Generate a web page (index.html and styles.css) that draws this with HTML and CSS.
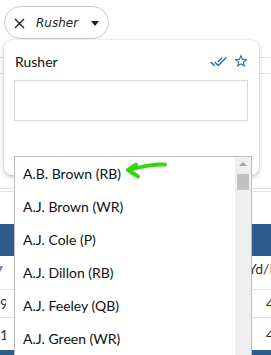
FILE: index.html
```html
<!DOCTYPE html>
<html>
<head>
<meta charset="utf-8">
<link rel="stylesheet" href="styles.css">
</head>
<body>
<div class="page">
  <div class="pill">
    <svg class="pill-x" width="11" height="11" viewBox="0 0 11 11"><path d="M1 1L10 10M10 1L1 10" stroke="#222" stroke-width="1.4" fill="none"/></svg>
    <span class="pill-text">Rusher</span>
    <span class="pill-caret"></span>
  </div>
  <div class="bg">
    <div class="bg-line l1"></div>
    <div class="bg-line l2"></div>
    <div class="bg-line l3"></div>
    <div class="bg-line l4"></div>
    <div class="bg-head"></div>
    <div class="bg-row r1"><span class="c-left caret">▾</span><span class="c-right">Yd/R</span></div>
    <div class="bg-row r2"><span class="c-left">9</span><span class="c-right">4</span></div>
    <div class="bg-row r3"><span class="c-left">1</span><span class="c-right">4</span></div>
    <div class="bg-head last"></div>
  </div>
</div>

<div class="panel">
  <div class="panel-head">
    <span class="panel-title">Rusher</span>
    <span class="panel-icons">
      <svg width="17" height="17" viewBox="0 0 24 24"><path fill="#2667b0" d="M18 7l-1.41-1.41-6.34 6.34 1.41 1.41L18 7zm4.24-1.41L11.66 16.17 7.48 12l-1.41 1.41L11.66 19l12-12-1.42-1.41zM.41 13.41L6 19l1.41-1.41L1.83 12 .41 13.41z"/></svg>
      <svg width="16" height="16" viewBox="0 0 24 24"><path fill="#2667b0" d="M22 9.24l-7.19-.62L12 2 9.19 8.63 2 9.24l5.46 4.73L5.82 21 12 17.27 18.18 21l-1.63-7.03L22 9.24zM12 15.4l-3.76 2.27 1-4.28-3.320-2.88 4.38-.38L12 6.1l1.71 4.04 4.38.38-3.32 2.88 1 4.28L12 15.4z"/></svg>
    </span>
  </div>
  <div class="panel-input"></div>
</div>

<div class="list">
  <div class="list-items">
    <div class="item">A.B. Brown (RB)</div>
    <div class="item">A.J. Brown (WR)</div>
    <div class="item">A.J. Cole (P)</div>
    <div class="item">A.J. Dillon (RB)</div>
    <div class="item">A.J. Feeley (QB)</div>
    <div class="item">A.J. Green (WR)</div>
  </div>
  <div class="scrollbar">
    <span class="sb-up"></span>
    <span class="sb-thumb"></span>
  </div>
</div>

<svg class="arrow" width="271" height="355" viewBox="0 0 271 355">
  <path d="M165 164.5 Q150 164 128 170 M128 170 L136 164.5 M128 170 L138 176.5" stroke="#2fd80f" stroke-width="4" stroke-linecap="round" fill="none"/>
</svg>
</body>
</html>
```

FILE: styles.css
```css
* { box-sizing: border-box; }
html { overflow: hidden; }
html, body { margin: 0; padding: 0; }
body {
  width: 271px;
  height: 355px;
  overflow: hidden;
  background: #fff;
  font-family: Lato, "Noto Sans", sans-serif;
  color: #222;
  position: relative;
}
.page { padding-top: 6px; }
.pill {
  margin-left: 4px;
  width: 105px;
  height: 33px;
  border: 1px solid #c9c9c9;
  border-radius: 17px;
  display: flex;
  align-items: center;
  padding-left: 9px;
}
.pill-x { display: block; margin-top: 1px; }
.pill-text {
  font-family: "DejaVu Sans", sans-serif;
  font-style: italic;
  font-size: 12px;
  color: #222;
  margin-left: 11px;
  margin-top: 1px;
}
.pill-caret {
  width: 0; height: 0;
  border-left: 4.5px solid transparent;
  border-right: 4.5px solid transparent;
  border-top: 5px solid #222;
  margin-left: 13px;
  margin-top: 2px;
}
.bg { display: flex; flex-direction: column; }
.bg-line { border-bottom: 1px solid #e2e2e2; }
.l1 { height: 19px; }
.l2 { height: 16px; }
.l3 { height: 115px; }
.l4 { height: 3px; }
.bg-head { height: 32px; background: #2b5c8c; margin-top: 32px; }
.bg-head.last { margin-top: 0; height: 5px; }
.bg-row {
  display: flex;
  justify-content: space-between;
  align-items: center;
  border-bottom: 1px solid #e2e2e2;
  font-size: 14px;
  color: #333;
}
.r1 { height: 34px; align-items: flex-start; padding-top: 4px; }
.r2 { height: 28px; }
.r3 { height: 32px; border-bottom: none; }
.c-left { width: 6px; text-align: right; overflow: hidden; white-space: nowrap; }
.c-left.caret { color: #888; font-size: 12px; text-align: left; margin-left: -3px; width: 7px; }
.c-right { width: 24px; overflow: hidden; white-space: nowrap; padding-left: 1px; }
.r2 .c-right, .r3 .c-right { padding-left: 9px; width: 14px; }

.panel {
  position: absolute;
  left: 4px;
  top: 40px;
  width: 255px;
  height: 135px;
  background: #fff;
  border-radius: 8px;
  box-shadow: 0 2px 5px rgba(0,0,0,0.22), 0 0 2px rgba(0,0,0,0.12);
  padding: 11px 11px 0 10px;
}
.panel-head {
  display: flex;
  justify-content: space-between;
  align-items: center;
  height: 20px;
  padding-left: 1px;
}
.panel-title { font-size: 14px; color: #111; }
.panel-icons { display: flex; align-items: center; gap: 6px; margin-right: -1px; }
.panel-icons svg { display: block; }
.panel-input {
  margin-top: 9px;
  height: 41px;
  border: 1px solid #d9d9d9;
}

.list {
  position: absolute;
  left: 14px;
  top: 156px;
  width: 238px;
  height: 199px;
  background: #fff;
  border: 1px solid #bdbdbd;
  border-bottom: none;
  display: flex;
  overflow: hidden;
}
.list-items { flex: 1; }
.item {
  height: 33px;
  line-height: 33px;
  padding-left: 8px;
  font-size: 14px;
  color: #111;
}
.scrollbar {
  width: 16px;
  background: #efefef;
  display: flex;
  flex-direction: column;
  align-items: center;
}
.sb-up {
  margin-top: 5px;
  width: 0; height: 0;
  border-left: 4px solid transparent;
  border-right: 4px solid transparent;
  border-bottom: 4px solid #a3a3a3;
}
.sb-thumb {
  margin-top: 8px;
  width: 12px;
  height: 16px;
  background: #c1c1c1;
}
.arrow { position: absolute; left: 0; top: 0; pointer-events: none; }
```
